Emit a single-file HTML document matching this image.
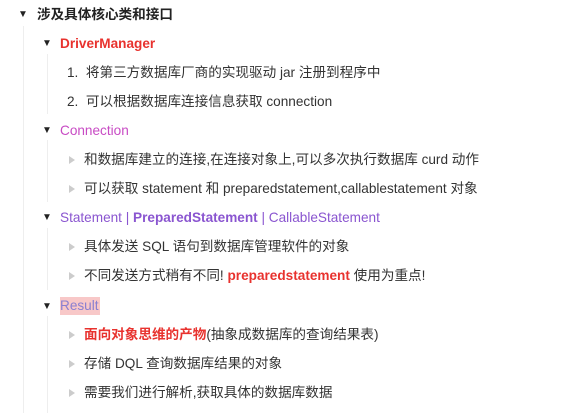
<!DOCTYPE html>
<html><head><meta charset="utf-8"><style>
body{margin:0;width:565px;height:413px;background:#fff;overflow:hidden;position:relative;font-family:"Liberation Sans","Noto Sans CJK SC",sans-serif;font-size:13.6px;color:#333}
.r{position:absolute;white-space:nowrap;line-height:16px}
.t{position:absolute;font-size:10px;color:#222;line-height:10px}
.b{position:absolute;width:0;height:0;border-left:6px solid #ccc;border-top:4px solid transparent;border-bottom:4px solid transparent}
.v{position:absolute;width:1px;background:#eee}
</style></head><body>
<div class="v" style="left:23px;top:26px;height:387px"></div>
<div class="v" style="left:47px;top:54px;height:60px"></div>
<div class="v" style="left:47px;top:140px;height:62px"></div>
<div class="v" style="left:47px;top:228px;height:62px"></div>
<div class="v" style="left:47px;top:316px;height:97px"></div>

<div class="t" style="left:18px;top:10px">▼</div>
<div class="r" style="left:37px;top:7px;font-weight:bold;color:#222">涉及具体核心类和接口</div>

<div class="t" style="left:42px;top:39px">▼</div>
<div class="r" style="left:60px;top:36px;font-weight:bold;color:#e8322e">DriverManager</div>
<div class="r" style="left:67px;top:65px">1.&nbsp; 将第三方数据库厂商的实现驱动 jar 注册到程序中</div>
<div class="r" style="left:67px;top:94px">2.&nbsp; 可以根据数据库连接信息获取 connection</div>

<div class="t" style="left:42px;top:126px">▼</div>
<div class="r" style="left:60px;top:123px;color:#c84bc4">Connection</div>
<div class="b" style="left:69px;top:156px"></div>
<div class="r" style="left:84px;top:152px">和数据库建立的连接,在连接对象上,可以多次执行数据库 curd 动作</div>
<div class="b" style="left:69px;top:185px"></div>
<div class="r" style="left:84px;top:181px">可以获取 statement 和 preparedstatement,callablestatement 对象</div>

<div class="t" style="left:42px;top:213px">▼</div>
<div class="r" style="left:60px;top:210px;color:#8a55d0">Statement | <b>PreparedStatement</b> | CallableStatement</div>
<div class="b" style="left:69px;top:243px"></div>
<div class="r" style="left:84px;top:239px">具体发送 SQL 语句到数据库管理软件的对象</div>
<div class="b" style="left:69px;top:272px"></div>
<div class="r" style="left:84px;top:268px">不同发送方式稍有不同! <b style="color:#e8322e">preparedstatement</b> 使用为重点!</div>

<div class="t" style="left:42px;top:302px">▼</div>
<div class="r" style="left:60px;top:297px;color:#8a7fd0;background:#f8c8c8;padding:1px 1px 1px 0">Result</div>
<div class="b" style="left:69px;top:331px"></div>
<div class="r" style="left:84px;top:327px"><b style="color:#e8322e">面向对象思维的产物</b>(抽象成数据库的查询结果表)</div>
<div class="b" style="left:69px;top:360px"></div>
<div class="r" style="left:84px;top:356px">存储 DQL 查询数据库结果的对象</div>
<div class="b" style="left:69px;top:389px"></div>
<div class="r" style="left:84px;top:385px">需要我们进行解析,获取具体的数据库数据</div>
</body></html>
